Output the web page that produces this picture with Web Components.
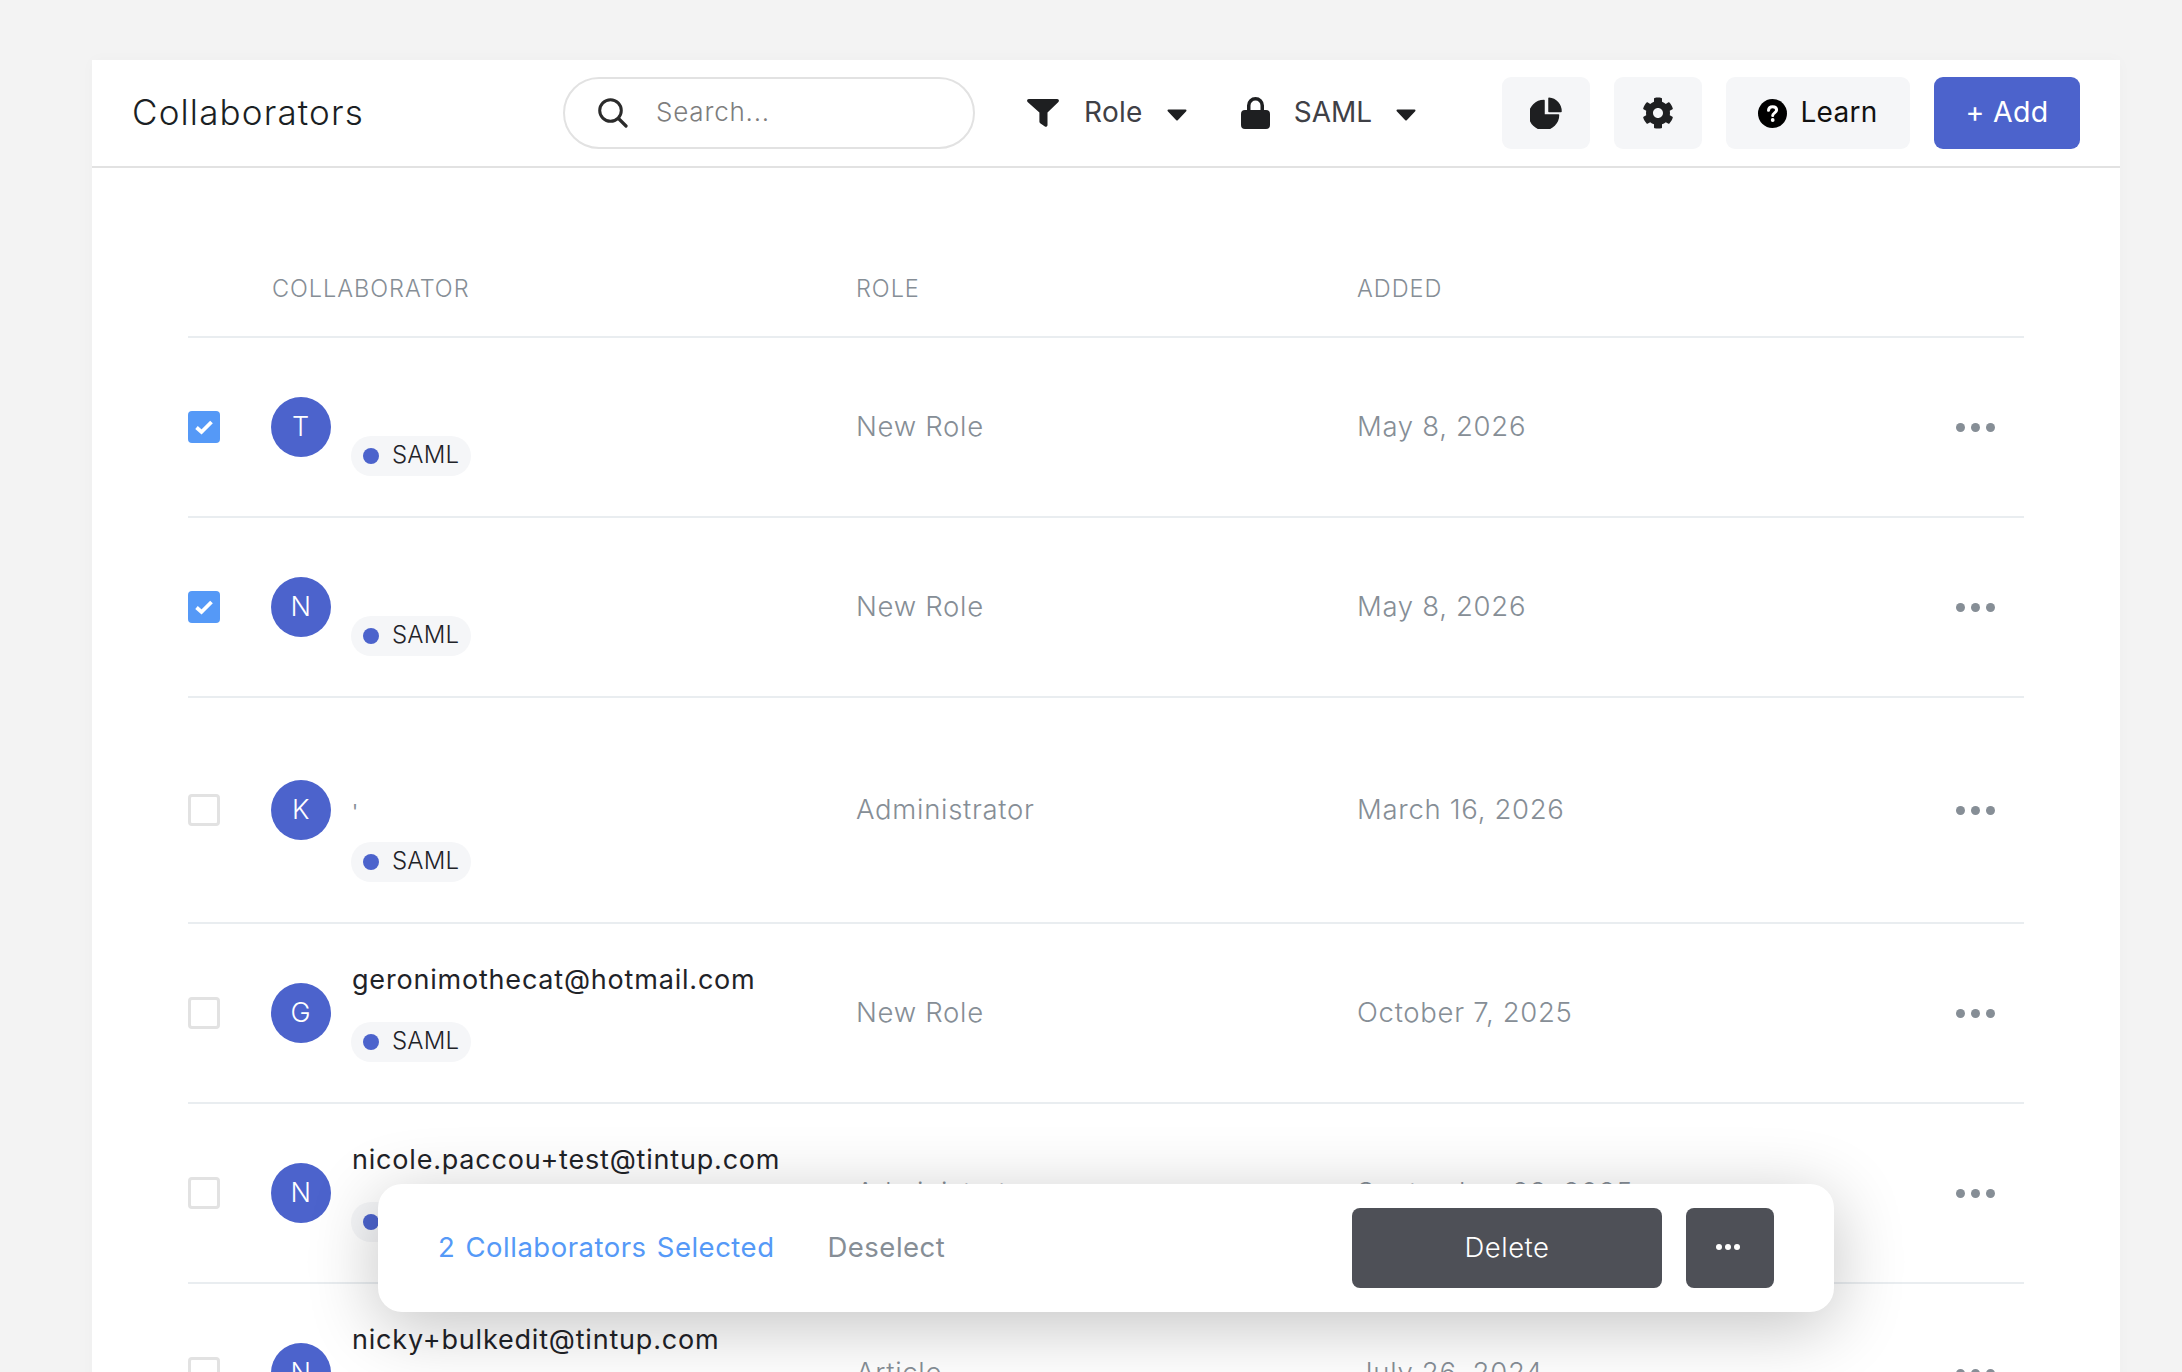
<!DOCTYPE html>
<html lang="en"><head><meta charset="utf-8"><title>Collaborators</title>
<style>
html,body{margin:0;height:1372px;overflow:hidden;background:#f3f3f3;font-family:Inter,"Liberation Sans",sans-serif}
</style></head><body>
<x-page>
  <x-card>
    <x-toolbar slot="toolbar"></x-toolbar>
    <x-table-head></x-table-head>
    <x-row check="on" letter="T" role-name="New Role" added="May 8, 2026"></x-row>
    <x-row check="on" letter="N" role-name="New Role" added="May 8, 2026"></x-row>
    <x-row tall letter="K" role-name="Administrator" added="March 16, 2026" mark="'"></x-row>
    <x-row letter="G" role-name="New Role" added="October 7, 2025" email="geronimothecat@hotmail.com"></x-row>
    <x-row letter="N" role-name="Administrator" added="September 23, 2025" email="nicole.paccou+test@tintup.com"></x-row>
    <x-row letter="N" role-name="Article" added="July 26, 2024" email="nicky+bulkedit@tintup.com"></x-row>
  </x-card>
  <x-bulk-bar></x-bulk-bar>
</x-page>
<script>
function def(name, css, html){
  customElements.define(name, class extends HTMLElement{
    connectedCallback(){
      if(this.shadowRoot) return;
      const r=this.attachShadow({mode:'open'});
      r.innerHTML='<style>'+css+'</style>'+(typeof html==='function'?html(this):html);
    }
  });
}
const I={
 filter:'<svg width="32" height="28" viewBox="0 0 32 28"><path fill="#1e1f21" d="M1.800 0h28.400c1.500 0 2.300 1.800 1.200 2.900L20.500 13.600V26c0 1.300-1.400 2.300-2.600 1.500l-4.700-3.300a1.900 1.900 0 0 1-.8-1.500v-9.100L.6 2.900C-.5 1.800.3 0 1.800 0z"/></svg>',
 lock:'<svg width="29" height="32" viewBox="0 0 29 32"><path fill="#1e1f21" d="M4 13h2V8.500a8.500 8.500 0 0 1 17 0V13h2a4 4 0 0 1 4 4v11a4 4 0 0 1-4 4H4a4 4 0 0 1-4-4V17a4 4 0 0 1 4-4zm5.500 0h10V8.500a5 5 0 0 0-10 0z"/></svg>',
 caret:'<svg width="20" height="12" viewBox="0 0 20 12"><path fill="#1e1f21" stroke="#1e1f21" stroke-width="2" stroke-linejoin="round" d="M1.500 1.500h17L10 10.500z"/></svg>',
 pie:'<svg width="32" height="32" viewBox="0 0 32 32"><g fill="#1e1f21" stroke="#1e1f21" stroke-width="1.500" stroke-linejoin="round"><path d="M19 1.200A13 13 0 0 1 31 14.500H19z"/><path d="M14 3.500V18h14.500A14.500 14.500 0 1 1 14 3.500z"/></g></svg>',
 gear:'<svg width="32" height="32" viewBox="0 0 512 512"><path fill="#1e1f21" d="M487.400 315.700l-42.600-24.600c4.300-23.200 4.300-47 0-70.200l42.600-24.600c4.900-2.800 7.100-8.600 5.500-14-11.100-35.600-30-67.800-54.700-94.600-3.800-4.100-10-5.100-14.800-2.300L380.800 110c-17.900-15.400-38.500-27.300-60.800-35.100V25.800c0-5.600-3.900-10.500-9.400-11.700-36.700-8.200-74.300-7.800-109.200 0-5.500 1.200-9.400 6.100-9.400 11.700V75c-22.200 7.900-42.800 19.800-60.800 35.100L88.700 85.500c-4.900-2.800-11-1.900-14.800 2.300-24.700 26.700-43.600 58.900-54.700 94.600-1.700 5.400.6 11.200 5.500 14L67.300 221c-4.300 23.200-4.300 47 0 70.200l-42.600 24.600c-4.900 2.800-7.100 8.600-5.500 14 11.100 35.600 30 67.800 54.700 94.600 3.800 4.100 10 5.100 14.800 2.300l42.600-24.600c17.900 15.400 38.500 27.300 60.800 35.100v49.200c0 5.600 3.900 10.500 9.400 11.700 36.700 8.200 74.300 7.800 109.200 0 5.500-1.200 9.400-6.100 9.400-11.700v-49.200c22.200-7.900 42.800-19.800 60.800-35.100l42.600 24.600c4.900 2.800 11 1.900 14.800-2.300 24.700-26.700 43.600-58.900 54.700-94.600 1.500-5.500-.7-11.300-5.600-14.100zM256 336c-44.100 0-80-35.900-80-80s35.900-80 80-80 80 35.900 80 80-35.900 80-80 80z"/></svg>',
 help:'<svg width="29" height="29" viewBox="0 0 29 29"><circle cx="14.500" cy="14.500" r="14.500" fill="#000"/><path fill="none" stroke="#fff" stroke-width="3" stroke-linecap="round" d="M10.500 11.300c.2-2.300 1.900-3.500 4.100-3.500 2.300 0 4 1.300 4 3.300 0 2.700-3.900 2.900-3.900 5.500"/><circle cx="14.700" cy="21" r="1.900" fill="#fff"/></svg>',
 search:'<svg width="30" height="30" viewBox="0 0 30 30"><circle cx="12.500" cy="12.500" r="10.800" fill="none" stroke="#2b2b2b" stroke-width="3"/><path d="M20.500 20.500l7.500 7.500" stroke="#2b2b2b" stroke-width="3.200" stroke-linecap="round"/></svg>',
 check:'<svg width="20" height="16" viewBox="0 0 20 16"><path d="M2.500 8.500l5 4.500 10-10" fill="none" stroke="#fff" stroke-width="3.800"/></svg>'
};
def('x-page',':host{display:block;position:relative;height:1372px;overflow:hidden;padding:60px 62px 0 92px;box-sizing:border-box}','<slot></slot>');
def('x-card',':host{display:block;background:#fff;height:1400px;box-shadow:0 0 14px rgba(0,0,0,.025)}','<slot name="toolbar"></slot><div style="padding:0 96px 0 96px"><slot></slot></div>');
def('x-icon-btn',':host{display:inline-flex;align-items:center;justify-content:center;height:72px;border-radius:9px;background:#f5f6f8;color:#111;font-size:28px;letter-spacing:.3px;box-sizing:border-box}','<slot></slot>');
def('x-toolbar',`:host{display:flex;align-items:center;height:108px;box-sizing:border-box;border-bottom:2px solid #e2e2e2;padding:0 40px 0 40px}
 .title{flex:0 0 431px;font-size:35px;font-weight:300;color:#1b1f24;letter-spacing:1.150px;padding-bottom:3px}
 .search{flex:0 0 412px;height:72px;box-sizing:border-box;border:2px solid #e2e2e2;border-radius:36px;display:flex;align-items:center;padding-left:33px;gap:28px;color:#7d7d7d;font-size:26px;font-weight:300;letter-spacing:.8px}
 .search div,.f span,x-icon-btn span,.add span{padding-bottom:3px}
 svg{display:block}
 .f{display:flex;align-items:center;color:#3f4046;font-size:28px;letter-spacing:.3px}
 .role{margin-left:52px}.saml{margin-left:54px;letter-spacing:0}
 .f span{margin:0 24px 0 25px}
 .saml span{margin:0 24px}
 .f svg:last-child{margin-top:3px}
 .gap{margin-left:auto;display:flex;gap:24px}
 .sq{width:88px}.learn{width:184px;gap:13px}
 .add{width:146px;background:#4c63cc;color:#fff;font-size:28.500px}`,
 `<div class="title">Collaborators</div>
  <div class="search">${I.search}<div>Search...</div></div>
  <div class="f role">${I.filter}<span>Role</span>${I.caret}</div>
  <div class="f saml">${I.lock}<span>SAML</span>${I.caret}</div>
  <div class="gap"><x-icon-btn class="sq">${I.pie}</x-icon-btn><x-icon-btn class="sq">${I.gear}</x-icon-btn><x-icon-btn class="learn">${I.help}<span>Learn</span></x-icon-btn><x-icon-btn class="add"><span>+ Add</span></x-icon-btn></div>`);
def('x-table-head',`:host{display:grid;grid-template-columns:84px 584px 501px 1fr;box-sizing:border-box;height:170px;padding-top:101px;border-bottom:2px solid #e9edf0;color:#868e96;font-size:23.500px;letter-spacing:.95px;font-weight:300;line-height:40px}`,
 '<div></div><div>COLLABORATOR</div><div>ROLE</div><div>ADDED</div>');
def('x-check',`:host{display:block;width:32px;height:32px;box-sizing:border-box;border-radius:4px;border:3px solid #e2e2e2;background:#fff}
 :host([on]){background:#5599f7;border:0;display:flex;align-items:center;justify-content:center}`,
 t=>t.hasAttribute('on')?I.check:'');
def('x-avatar',`:host{display:flex;align-items:center;justify-content:center;width:60px;height:60px;flex:none;border-radius:50%;background:#4c63cc;color:#fff;font-size:27px;font-weight:300;box-sizing:border-box;padding-bottom:2px}`,'<slot></slot>');
def('x-pill',`:host{display:inline-flex;align-items:center;height:40px;width:120px;box-sizing:border-box;padding-left:12px;border-radius:20px;background:#f5f6f8;color:#1f2328;font-size:24px;gap:13px;letter-spacing:.2px}
 i{width:16px;height:16px;border-radius:50%;background:#4c63cc}
 span{margin-bottom:3px}`,'<i></i><span><slot></slot></span>');
def('x-row',`:host{display:grid;grid-template-columns:83px 585px 501px 1fr 70px;align-items:center;height:180px;box-sizing:border-box;border-bottom:2px solid #e9edf0;color:#868e96;font-size:27.500px;font-weight:300;letter-spacing:.7px}
 :host([tall]){height:226px}
 .who{display:flex;align-self:stretch;align-items:center;gap:20px}
 .txt{align-self:flex-end;padding-bottom:40px}
 .email{line-height:40px;margin-bottom:22px;font-size:27px;font-weight:400;color:#1f2328;letter-spacing:.8px;white-space:nowrap;padding-left:1px}
 .mark{line-height:40px;margin-bottom:10px;font-size:20px;font-weight:400;color:#868e96;padding-left:1px}
 .cell{padding-bottom:3px}
 .dots{display:flex;gap:6px;justify-content:flex-start;padding-left:2px}
 .dots i{width:9px;height:9px;border-radius:50%;background:#868e96}
 x-pill{display:flex}`,
 t=>{const g=n=>t.getAttribute(n);
  return `<div>${'<x-check'+(g('check')?' on':'')+'></x-check>'}</div>
  <div class="who"><x-avatar>${g('letter')}</x-avatar><div class="txt">${g('email')?`<div class="email">${g('email')}</div>`:''}${g('mark')?`<div class="mark">${g('mark')}</div>`:''}<x-pill>SAML</x-pill></div></div>
  <div class="cell">${g('role-name')}</div><div class="cell">${g('added')}</div><div class="dots"><i></i><i></i><i></i></div>`});
def('x-bulk-bar',`:host{position:absolute;left:378px;top:1184px;width:1456px;height:128px;box-sizing:border-box;background:#fff;border-radius:24px;box-shadow:0 14px 70px rgba(0,0,0,.24);display:flex;align-items:center;padding:0 60px;font-size:27.500px;letter-spacing:.5px}
 .sel{color:#5599f7;margin-right:53px;word-spacing:2px;padding-bottom:2px}
 .de{color:#868e96;margin-right:auto;padding-bottom:2px}
 .btn{height:80px;background:#4e5057;border-radius:8px;color:#fff;display:flex;align-items:center;justify-content:center;font-weight:300;box-sizing:border-box}
 .del{width:310px;margin-right:24px;padding-bottom:2px}.more{width:88px;gap:3px;padding-bottom:2px;padding-right:4px}
 .more i{width:6px;height:6px;border-radius:50%;background:#fff}`,
 `<div class="sel">2 Collaborators Selected</div><div class="de">Deselect</div><div class="btn del">Delete</div><div class="btn more"><i></i><i></i><i></i></div>`);
</script>
</body></html>
